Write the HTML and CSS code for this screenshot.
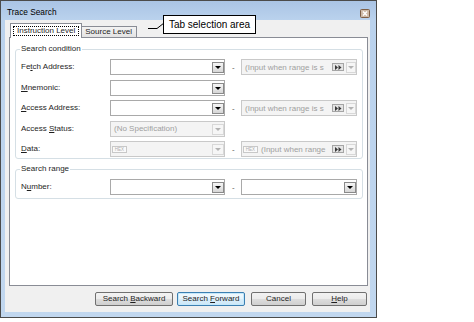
FILE: index.html
```html
<!DOCTYPE html>
<html>
    <head>
        <meta charset="UTF-8">
        <title>Trace Search</title>
        <link rel="stylesheet" href="styles.css">
    </head>
    <body>
        <div class="window">
            <div class="titlebar">
                <span class="title">Trace Search</span>
                <span class="closebtn">
                    <svg width="10" height="9" viewBox="0 0 10 9">
                        <rect x="0.5" y="0.5" width="9" height="8" rx="1" fill="#cdb9a6" stroke="#7d5f47"/>
                        <path d="M3 2.5 L7 6.5 M7 2.5 L3 6.5" stroke="#fff" stroke-width="1.4"/>
                    </svg>
                </span>
            </div>

            <div class="client">
                <div class="tabs">
                    <div class="tab active"><span class="focus">Instruction Level</span></div>
                    <div class="tab">Source Level</div>
                </div>

                <div class="tabpage">
                    <fieldset class="group">
                        <legend>Search condition</legend>
                        <div class="rows">
                            <span class="label">Fe<u>t</u>ch Address:</span>
                            <div class="combo"><span class="text"></span><span class="drop"></span></div>
                            <span class="dash">-</span>
                            <div class="combo disabled">
                                <span class="text">(Input when range is s</span>
                                <span class="range"><svg width="7" height="5" viewBox="0 0 7 5"><path d="M0 0 L3 2.5 L0 5 Z M3.5 0 L6.5 2.5 L3.5 5 Z" fill="#3a3a3a"/></svg></span>
                                <span class="drop small"></span>
                            </div>

                            <span class="label"><u>M</u>nemonic:</span>
                            <div class="combo"><span class="text"></span><span class="drop"></span></div>
                            <span></span>
                            <span></span>

                            <span class="label"><u>A</u>ccess Address:</span>
                            <div class="combo"><span class="text"></span><span class="drop"></span></div>
                            <span class="dash">-</span>
                            <div class="combo disabled">
                                <span class="text">(Input when range is s</span>
                                <span class="range"><svg width="7" height="5" viewBox="0 0 7 5"><path d="M0 0 L3 2.5 L0 5 Z M3.5 0 L6.5 2.5 L3.5 5 Z" fill="#3a3a3a"/></svg></span>
                                <span class="drop small"></span>
                            </div>

                            <span class="label">Access <u>S</u>tatus:</span>
                            <div class="combo disabled"><span class="text">(No Specification)</span><span class="drop"></span></div>
                            <span></span>
                            <span></span>

                            <span class="label"><u>D</u>ata:</span>
                            <div class="combo disabled"><span class="hex">HEX</span><span class="text"></span><span class="drop"></span></div>
                            <span class="dash">-</span>
                            <div class="combo disabled">
                                <span class="hex">HEX</span>
                                <span class="text">(Input when range</span>
                                <span class="range"><svg width="7" height="5" viewBox="0 0 7 5"><path d="M0 0 L3 2.5 L0 5 Z M3.5 0 L6.5 2.5 L3.5 5 Z" fill="#3a3a3a"/></svg></span>
                                <span class="drop small"></span>
                            </div>
                        </div>
                    </fieldset>

                    <fieldset class="group second">
                        <legend>Search range</legend>
                        <div class="rows">
                            <span class="label">N<u>u</u>mber:</span>
                            <div class="combo"><span class="text"></span><span class="drop"></span></div>
                            <span class="dash">-</span>
                            <div class="combo"><span class="text"></span><span class="drop"></span></div>
                        </div>
                    </fieldset>
                </div>

                <div class="buttons">
                    <button class="btn back">Search <u>B</u>ackward</button>
                    <button class="btn default">Search <u>F</u>orward</button>
                    <button class="btn">Cancel</button>
                    <button class="btn"><u>H</u>elp</button>
                </div>
            </div>
        </div>

        <svg class="tail" width="26" height="14" viewBox="0 0 26 14">
            <polyline points="0,10.5 9,10.5 16,5" fill="none" stroke="#000" stroke-width="1"/>
        </svg>
        <div class="callout">Tab selection area</div>
    </body>
</html>
```

FILE: styles.css
```css
*{
    box-sizing: border-box;
}
body{
    margin: 0;
    background-color: #fff;
    font-family: "Liberation Sans", Arial, sans-serif;
    font-size: 8px;
    color: #1e1e1e;
}
.window{
    position: relative;
    width: 377px;
    height: 318px;
    border: 1px solid #4b4b4b;
    background: linear-gradient(#aac4e5, #bad2ed 19px, #c1d7ef);
    padding: 0 6px 5px 4px;
    display: flex;
    flex-direction: column;
}
.titlebar{
    height: 19px;
    display: flex;
    justify-content: space-between;
    align-items: flex-end;
    padding: 0 0 2px 2px;
}
.title{
    font-size: 8.3px;
    line-height: 9px;
    margin-bottom: 1px;
    color: #000;
}
.closebtn{
    display: flex;
}
.client{
    flex: 1;
    background-color: #f0f0f0;
    padding: 3px 2px 0 4px;
    display: flex;
    flex-direction: column;
}
.tabs{
    display: flex;
    align-items: flex-end;
    height: 14px;
    padding-left: 1px;
}
.tab{
    height: 11px;
    border: 1px solid #898c95;
    border-bottom: none;
    background: linear-gradient(#f3f3f3, #e3e3e3);
    padding: 0 4px 0 3px;
    line-height: 10px;
    margin-left: -1px;
}
.tab.active{
    position: relative;
    z-index: 1;
    height: 15px;
    margin-left: 0;
    margin-bottom: -1px;
    background: #fff;
    padding: 2px 2px 0;
}
.focus{
    display: block;
    outline: 1px dotted #000;
    outline-offset: -1px;
    padding: 0 4px;
    line-height: 10px;
}
.tabpage{
    height: 249px;
    border: 1px solid #898c95;
    background-color: #fff;
    padding: 0 4px 0 5px;
}
.group{
    margin: 6px 0 0;
    border: 1px solid #d5dfe5;
    border-radius: 3px;
    padding: 5px 4px 1px 5px;
    min-width: 0;
}
.group.second{
    margin-top: 5px;
    padding-bottom: 3px;
}
.group legend{
    padding: 0 1px;
    margin-left: -1px;
    line-height: 10px;
}
.rows{
    display: grid;
    grid-template-columns: 89px 115px 16px 116px;
    grid-auto-rows: 16px;
    row-gap: 4.5px;
    align-items: center;
}
.label{
    line-height: 16px;
}
.dash{
    padding-left: 7px;
    color: #555;
}
.combo{
    height: 16px;
    display: flex;
    align-items: center;
    border: 1px solid #a9a9a9;
    background-color: #fff;
}
.combo .text{
    flex: 1;
    padding-left: 3px;
    white-space: nowrap;
    overflow: hidden;
}
.combo.disabled{
    background-color: #f4f4f4;
    border-color: #c9c9c9;
    color: #a0a0a0;
}
.drop{
    width: 12px;
    height: 11px;
    margin-top: 1px;
    border: 1px solid #8a8a8a;
    background: linear-gradient(#f6f6f6, #d6d6d6);
    display: flex;
    justify-content: center;
    align-items: center;
}
.drop::after{
    content: "";
    border-left: 3px solid transparent;
    border-right: 3px solid transparent;
    border-top: 3px solid #000;
}
.disabled .drop{
    border-color: #d8d8d8;
    background: #f6f6f6;
}
.disabled .drop::after{
    border-top-color: #b3b3b3;
}
.drop.small{
    width: 10px;
    margin-left: 2px;
}
.range{
    width: 12px;
    height: 8px;
    border: 1px solid #a5a5a5;
    background-color: #e4e4e4;
    display: flex;
    justify-content: center;
    align-items: center;
}
.hex{
    width: 15px;
    height: 7px;
    margin-left: 1px;
    border: 1px solid #c8c8c8;
    background-color: #fafafa;
    color: #adadad;
    font-size: 4.5px;
    line-height: 5px;
    text-align: center;
}
.buttons{
    display: flex;
    justify-content: flex-end;
    gap: 6px;
    margin-top: 6px;
    padding-right: 1px;
}
.btn{
    height: 14px;
    width: 55px;
    padding: 0;
    border: 1px solid #707070;
    border-radius: 2px;
    background: linear-gradient(#f2f2f2 0%, #ebebeb 50%, #dddddd 51%, #cfcfcf 100%);
    font-family: "Liberation Sans", Arial, sans-serif;
    font-size: 8px;
    line-height: 12px;
    color: #1e1e1e;
}
.btn.back{
    width: 78px;
    margin-right: -2px;
}
.btn.default{
    width: 68px;
    border-color: #3c7fb1;
    box-shadow: inset 0 0 0 1px #c4e8fb;
    background: linear-gradient(#f2f9fd 0%, #e6f4fc 50%, #d9eefa 51%, #cde7f7 100%);
}
.callout{
    position: absolute;
    left: 163px;
    top: 15px;
    width: 93px;
    height: 19px;
    border: 1px solid #000;
    background-color: #fff;
    color: #000;
    font-size: 10px;
    line-height: 17px;
    text-align: center;
}
.tail{
    position: absolute;
    left: 148px;
    top: 18px;
}
```
